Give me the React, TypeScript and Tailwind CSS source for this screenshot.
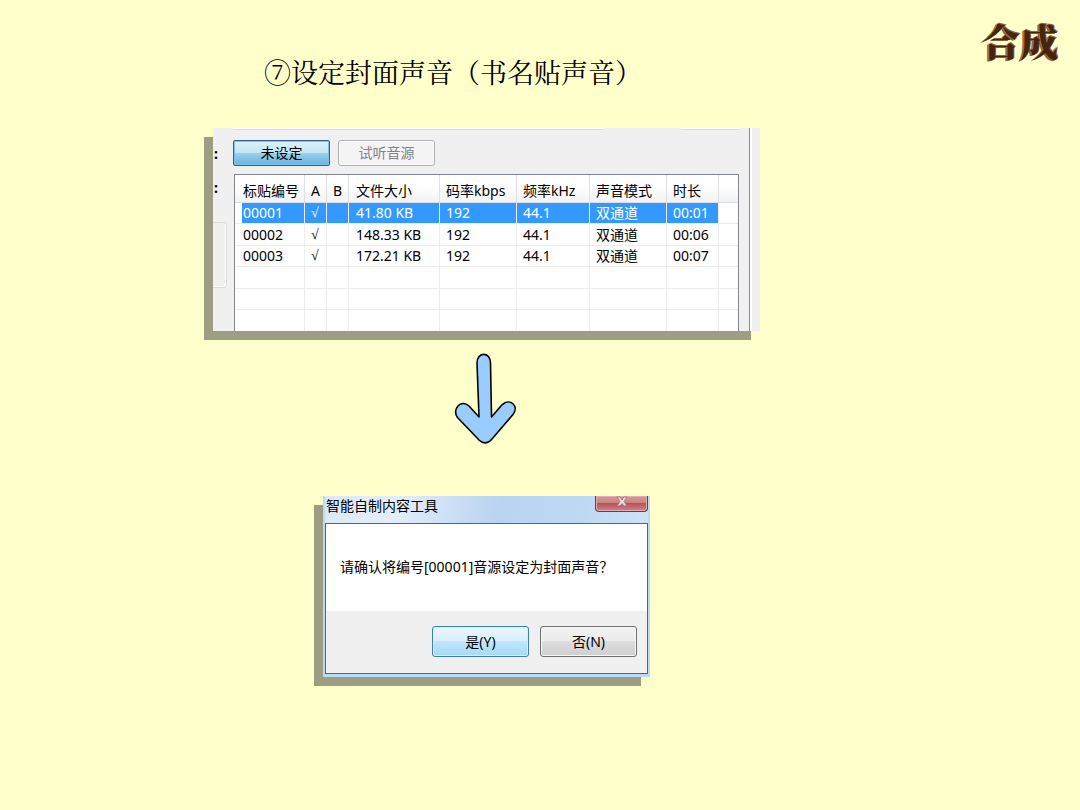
const columns = [
  { label: "标贴编号", width: "w-[70px]", pad: "pl-2" },
  { label: "A", width: "w-[22px]", pad: "pl-[6px]" },
  { label: "B", width: "w-[22px]", pad: "pl-[6px]" },
  { label: "文件大小", width: "w-[91px]", pad: "pl-[7px]" },
  { label: "码率kbps", width: "w-[77px]", pad: "pl-[6px]" },
  { label: "频率kHz", width: "w-[73px]", pad: "pl-[6px]" },
  { label: "声音模式", width: "w-[77px]", pad: "pl-[6px]" },
  { label: "时长", width: "w-[52px]", pad: "pl-[6px]" },
  { label: "", width: "w-auto", pad: "pl-0" },
];

const rows = [
  ["00001", "√", "", "41.80 KB", "192", "44.1", "双通道", "00:01", ""],
  ["00002", "√", "", "148.33 KB", "192", "44.1", "双通道", "00:06", ""],
  ["00003", "√", "", "172.21 KB", "192", "44.1", "双通道", "00:07", ""],
  ["", "", "", "", "", "", "", "", ""],
  ["", "", "", "", "", "", "", "", ""],
  ["", "", "", "", "", "", "", "", ""],
];

const cellColor = (row: number, col: number) => {
  if (row !== 0 || col === 8) return "text-black";
  // the highlight starts a little inside the first cell
  if (col === 0)
    return "text-white bg-[linear-gradient(to_right,#fff_7px,#3399ff_7px)]";
  return "text-white bg-[#3399ff]";
};

const Header = () => {
  return (
    <header className="flex items-start justify-between pt-[18px] pl-[264px] pr-[22px]">
      <h1 className="pt-[34px] font-['Noto_Serif_CJK_SC','Noto_Sans_CJK_SC',serif] text-[27px] leading-10 font-normal whitespace-nowrap text-black">
        ⑦设定封面声音（书名贴声音）
      </h1>
      <div className="font-['Noto_Serif_CJK_SC','Noto_Sans_CJK_SC',serif] text-[38px] leading-[44px] font-black whitespace-nowrap text-[#4a230c] [text-shadow:-1px_0_0_#a5805f,-2px_1px_0_#7d5c42,1px_-1px_0_#8a6244]">
        合成
      </div>
    </header>
  );
};

const SourceTable = () => {
  return (
    <table className="w-full table-fixed border-separate border-spacing-0 text-left text-[14px] leading-5">
      <thead>
        <tr className="h-7 bg-linear-to-b from-white from-40% to-[#f1f2f4]">
          {columns.map(({ label, width, pad }, i) => (
            <th
              key={i}
              className={`${width} ${pad} border-r border-b border-[#dfdfe1] p-0 pt-1 font-normal whitespace-nowrap last:border-r-0`}
            >
              {label}
            </th>
          ))}
        </tr>
      </thead>
      <tbody>
        {rows.map((row, r) => (
          <tr key={r} className="odd:h-[21px] even:h-[22px]">
            {row.map((cell, c) => (
              <td
                key={c}
                className={`${columns[c].pad} ${cellColor(r, c)} border-r border-b border-[#ededed] p-0 leading-[20px] whitespace-nowrap last:border-r-0`}
              >
                {cell === "√" ? (
                  <span className="block font-['Liberation_Serif',serif] leading-5">
                    √
                  </span>
                ) : (
                  cell
                )}
              </td>
            ))}
          </tr>
        ))}
      </tbody>
    </table>
  );
};

const SourcePanel = () => {
  return (
    <section className="flex h-[203px] w-[547px] overflow-hidden bg-[#f0f0f0]">
      <div className="w-5 shrink-0 pl-px text-[14px] leading-5 font-bold">
        <div className="pt-4">:</div>
        <div className="pt-[14px]">:</div>
        <div className="mt-6 -ml-px h-[66px] w-[14px] rounded-r-[3px] border border-l-0 border-[#dcdcdc] shadow-[inset_-1px_-1px_0_#fff]" />
      </div>
      <div className="flex-1">
        <div className="flex h-[2px] justify-between">
          <div className="w-[370px] border-b border-[#dcdcdc] bg-white" />
          <div className="w-[58px] border-b border-[#dcdcdc] bg-white" />
        </div>
        <div className="mt-[10px] flex gap-2 text-[14px] leading-5">
          <button className="h-[26px] w-[97px] rounded-[2px] border border-[#2c628b] bg-[linear-gradient(#dff2fb,#c3e5f6_48%,#9ad1ee_50%,#68b3db)] shadow-[inset_0_0_0_1px_#7cc3e8]">
            未设定
          </button>
          <button
            disabled
            className="h-[26px] w-[97px] rounded-[3px] border border-[#adb2b5] bg-[#f4f4f4] text-[#838383] shadow-[inset_0_0_0_1px_#fcfcfc]"
          >
            试听音源
          </button>
        </div>
        <div className="mt-2 ml-px h-40 border border-[#82878f] bg-white">
          <SourceTable />
        </div>
      </div>
      <div className="ml-[10px] w-[11px] border-l border-[#8c8c8c] shadow-[inset_2px_0_0_#fff]" />
    </section>
  );
};

const Arrow = () => {
  return (
    <svg width="65" height="91" viewBox="0 0 65 91" aria-hidden="true">
      <path
        d="M23 10C23 -1.500 36.500 -1.500 36.500 10L37.500 64L48 51.800C56 44.500 65.500 53 59 61.500L38 86C34 91 29 91 25 87L3.500 64.500C-2.500 56.500 7 45.500 15 53L25 64Z"
        fill="#99ccff"
        stroke="#000"
        strokeWidth="1.600"
        strokeLinejoin="round"
      />
    </svg>
  );
};

const ConfirmDialog = () => {
  return (
    <section className="w-[327px] border-x-2 border-b-[3px] border-[#b9dcf3] bg-[linear-gradient(100deg,#dce9f7,#e3eefa_20%,#b9d3f1_50%,#bfd9f5_75%,#d5e6f8)]">
      <div className="flex h-[27px] justify-between">
        <h2 className="pl-px text-[14px] leading-5 font-normal">智能自制内容工具</h2>
        <button
          aria-label="关闭"
          className="flex h-4 w-[53px] justify-center rounded-b-[4px] border border-t-0 border-[#6e3a46] bg-[linear-gradient(#d59a9b,#cc8182_45%,#b95356_50%,#cd8587)] shadow-[inset_0_0_0_1px_#dfafb0]"
        >
          <svg width="14" height="12" viewBox="0 0 14 12">
            <path
              d="M2 1H5L7 4L9 1H12L9 5.500L12 10H9L7 7.500L5 10H2L5 5.500Z"
              fill="#eee0e1"
              stroke="#9c686d"
              strokeWidth="0.800"
            />
          </svg>
        </button>
      </div>
      <div className="border border-[#4f6484] bg-[#f0f0f0]">
        <p className="bg-white pt-[33px] pb-[34px] pl-[14px] text-[14px] leading-5 whitespace-nowrap">
          请确认将编号[00001]音源设定为封面声音？
        </p>
        <div className="flex justify-end gap-[11px] pt-[15px] pb-4 pr-[10px] text-[14px] leading-5">
          <button className="h-[31px] w-[97px] rounded-[3px] border border-[#3c7fb1] bg-[linear-gradient(#eaf6fd,#d9f0fc_48%,#bee6fd_50%,#a7d9f5)] shadow-[inset_0_0_0_1px_#d5f1fc]">
            是(Y)
          </button>
          <button className="h-[31px] w-[97px] rounded-[3px] border border-[#707070] bg-[linear-gradient(#f2f2f2,#ebebeb_48%,#dddddd_50%,#cfcfcf)] shadow-[inset_0_0_0_1px_#f6f6f6]">
            否(N)
          </button>
        </div>
      </div>
    </section>
  );
};

export default function App() {
  return (
    <div className="min-h-screen bg-[#ffffcc] font-['Noto_Sans','Noto_Sans_CJK_SC',sans-serif] text-black">
      <Header />
      <main className="flex flex-col items-center pt-9 pr-[107px]">
        <div className="shadow-[-9px_9px_0_#9d9d84]">
          <SourcePanel />
        </div>
        <div className="pt-[22px] pb-[52px]">
          <Arrow />
        </div>
        <div className="shadow-[-9px_9px_0_#9d9d84]">
          <ConfirmDialog />
        </div>
      </main>
    </div>
  );
}
